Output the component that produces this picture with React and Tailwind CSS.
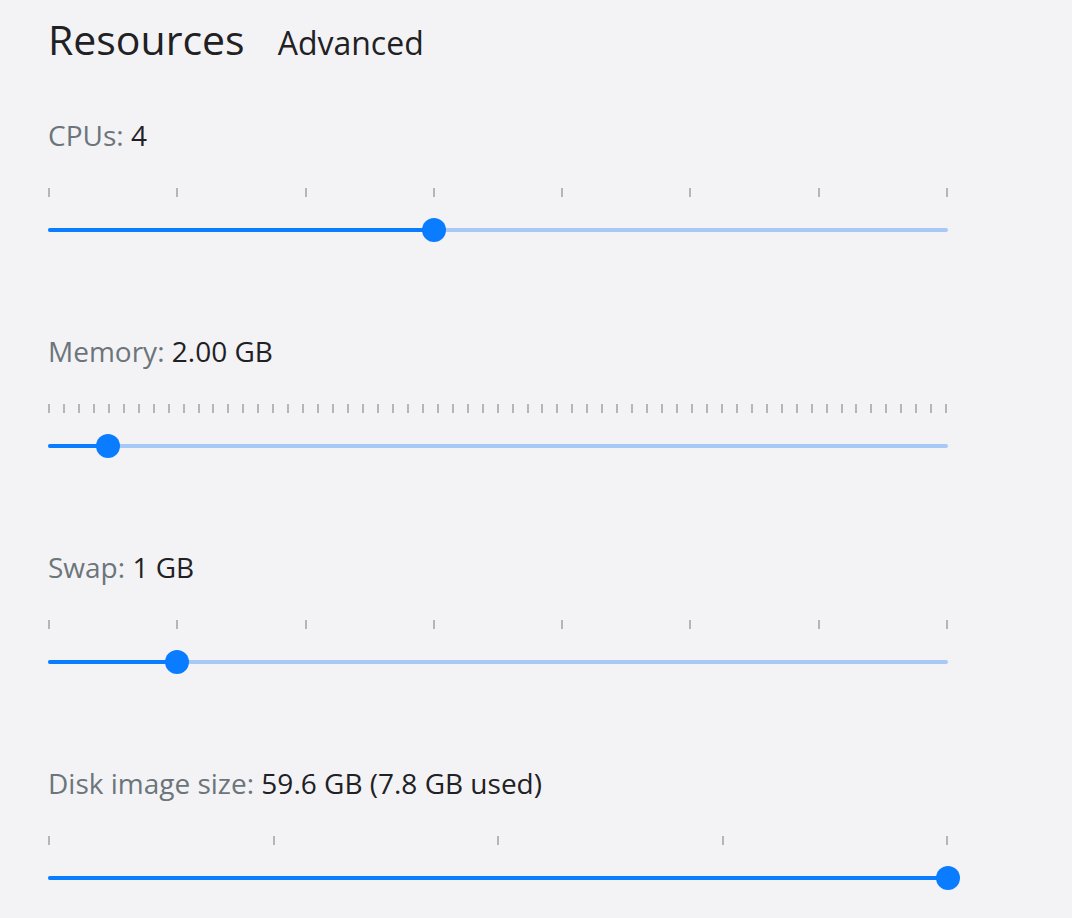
import React from 'react';

const sliders = [
  { label: 'CPUs:', value: '4', ticks: 8, pos: 3 / 7 },
  { label: 'Memory:', value: '2.00 GB', ticks: 61, pos: 4 / 60 },
  { label: 'Swap:', value: '1 GB', ticks: 8, pos: 1 / 7 },
  { label: 'Disk image size:', value: '59.6 GB (7.8 GB used)', ticks: 5, pos: 1 },
];

function Slider({ label, value, ticks, pos }) {
  return (
    <div className="flex flex-col">
      <div className="h-[36px] leading-[36px] text-[28px]">
        <span className="text-[#6c757a]">{label}</span>{' '}
        <span className="text-[#1f2124]">{value}</span>
      </div>
      <div className="mt-[35px] w-[900px] h-[9px] flex justify-between">
        {Array.from({ length: ticks }).map((_, i) => (
          <div key={i} className="w-[2px] h-[9px] bg-[#b4b6b8]" />
        ))}
      </div>
      <div className="mt-[21px] w-[900px] h-[24px] relative flex items-center">
        <div className="w-full h-[4px] rounded-full bg-[#a6c9f7] relative">
          <div
            className="absolute left-0 top-0 h-[4px] rounded-full bg-[#0a7cff]"
            style={{ width: `${pos * 100}%` }}
          />
        </div>
        <div
          className="absolute top-0 w-[24px] h-[24px] -ml-[12px] rounded-full bg-[#0a7cff]"
          style={{ left: `${pos * 100}%` }}
        />
      </div>
    </div>
  );
}

export default function App() {
  return (
    <div
      className="w-[1072px] h-[918px] bg-[#f3f3f6] pl-[48px] pt-[15px] overflow-hidden"
      style={{ fontFamily: '"Open Sans", "Noto Sans", sans-serif' }}
    >
      <div className="flex items-baseline h-[48px] leading-[48px]">
        <h1 className="text-[41px] text-[#1f2124]">Resources</h1>
        <span className="ml-[33px] text-[32px] text-[#1f2124]">Advanced</span>
      </div>
      <div className="mt-[54px] flex flex-col gap-[91px]">
        {sliders.map((s) => (
          <Slider key={s.label} {...s} />
        ))}
      </div>
    </div>
  );
}
